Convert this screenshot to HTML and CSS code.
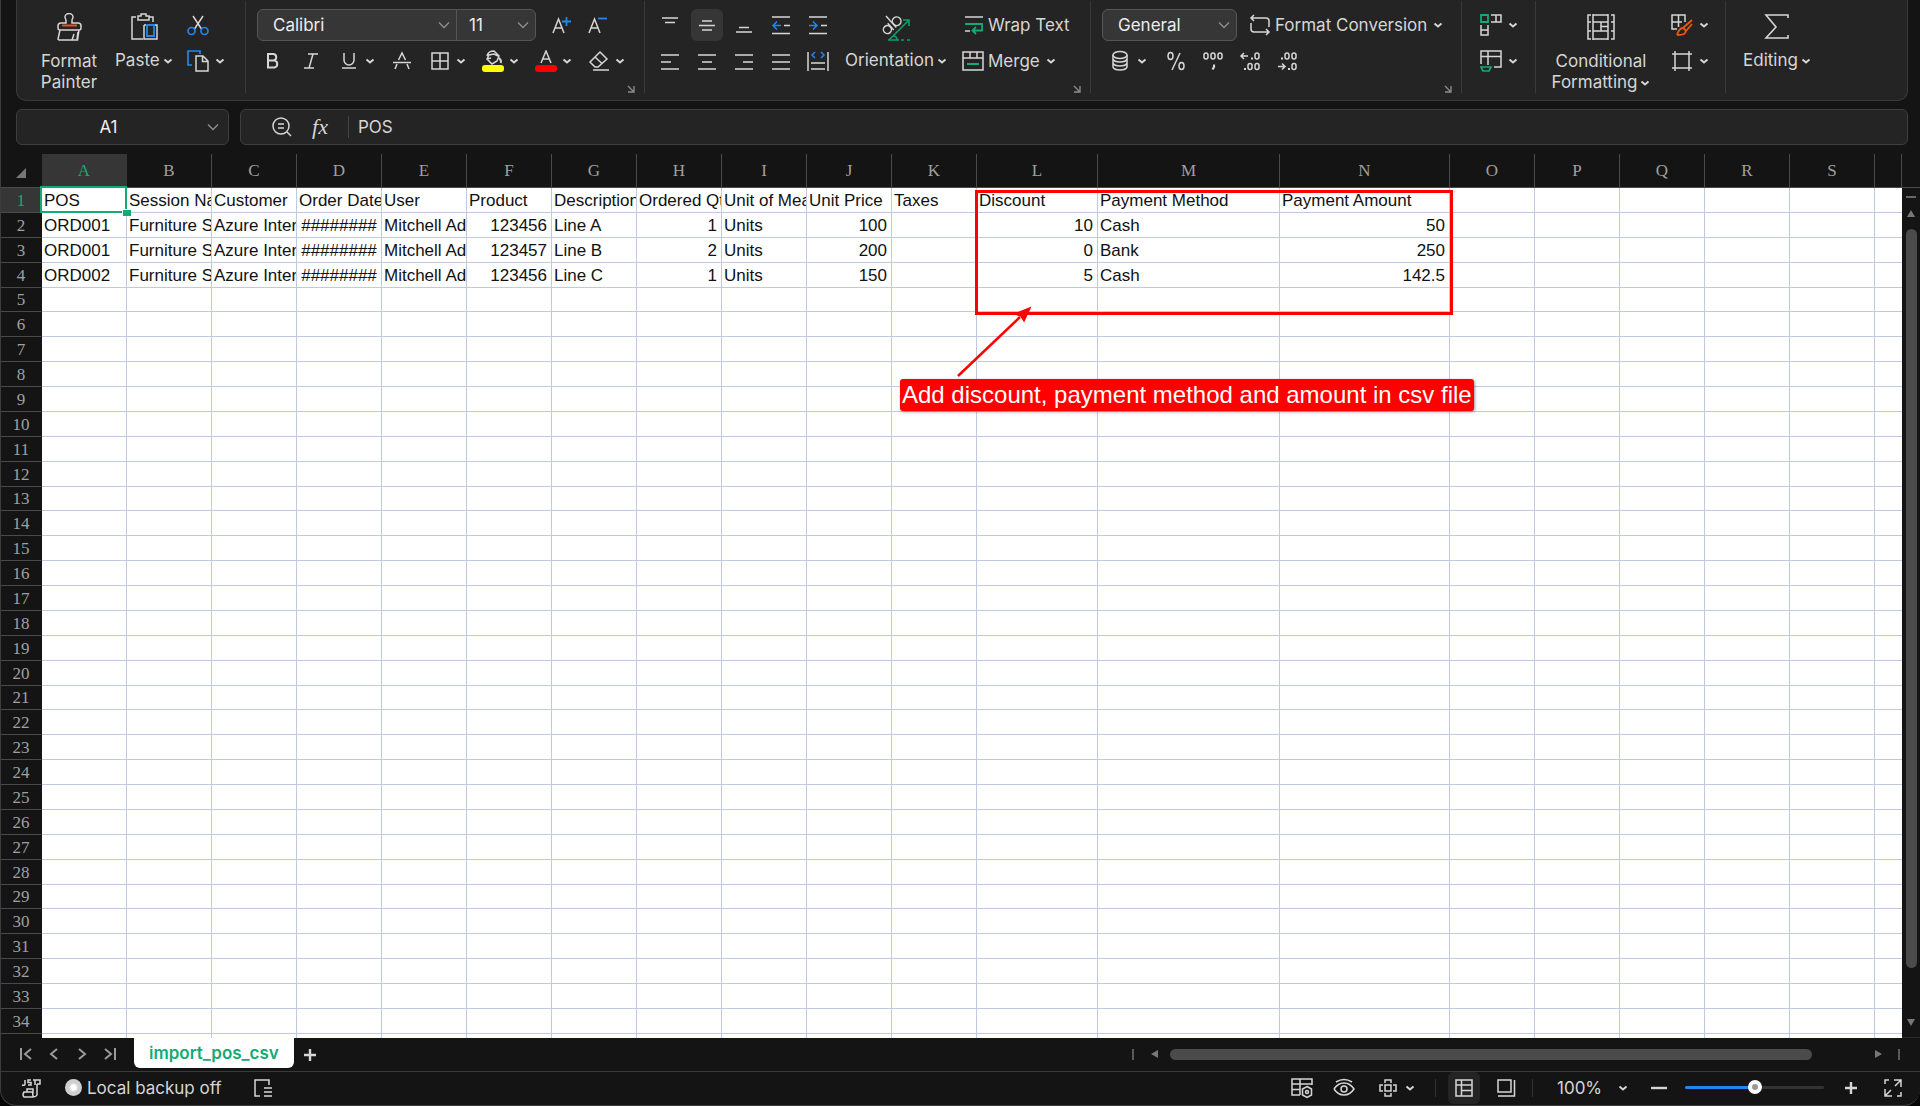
FILE: index.html
```html
<!DOCTYPE html>
<html lang="en">
<head>
<meta charset="utf-8">
<title>import_pos_csv</title>
<link rel="stylesheet" href="styles.css">
</head>
<body>
<svg class="defs" aria-hidden="true">
  <symbol id="chev" viewBox="0 0 10 10"><path d="M1.5 3.5 5 6.5 8.500 3.500" stroke-width="2"/></symbol>
  <symbol id="chev-wide" viewBox="0 0 12 12"><path d="M1 3.500 6 8.500 11 3.500" stroke-width="1.300"/></symbol>
  <symbol id="launch" viewBox="0 0 8 8"><path d="M1 1 6 6M7 1V7H1" stroke-width="1.300"/></symbol>
</svg>
<div class="window">
  <header class="ribbon">
    <section class="group clipboard">
      <button class="big painter"><svg class="icon28" viewBox="0 0 28 28"><path d="M11 10V7.500C11 6 10 5.500 10 4A4 3.500 0 0 1 18 4C18 5.500 17 6 17 7.500V10H23Q26 10 26 13V15Q26 17 24 17L22.500 27H4L3 26 5 17Q3 17 3 15V13Q3 10 6 10ZM5 17H24M17 27 19 21M22 26 23 19"/><path d="M7 12.500H22" stroke="#e8501d" stroke-width="2"/></svg><span class="label two">Format<br>Painter</span></button>
      <button class="big"><svg class="icon28" viewBox="0 0 28 28"><path d="M6 4H2V26H13M19 4H23V9M8 3H11V1H16V3H19V7H8Z"/><path d="M14 12H16M26 12H27V26H14V12M24 12H27"/><path d="M17 12H24V23H17Z" stroke="#2186f0" stroke-width="1.800"/></svg><span class="label">Paste<svg class="chev"><use href="#chev"/></svg></span></button>
      <div class="stack">
        <button class="tool" aria-label="Cut"><svg class="icon22" viewBox="0 0 22 22"><path d="M6 2 14.500 15M16 2 7.500 15"/><g stroke="#2186f0" stroke-width="1.700"><circle cx="4.500" cy="17" r="3.500"/><circle cx="17.500" cy="17" r="3.500"/></g></svg></button>
        <button class="split" aria-label="Copy"><svg class="icon22" viewBox="0 0 22 22"><path d="M5 15H1V1H13V4" stroke="#2186f0" stroke-width="1.700"/><path d="M9 6H16L21 11V21H9ZM15.500 6V11.500H21"/></svg><svg class="chev"><use href="#chev"/></svg></button>
      </div>
    </section>
    <section class="group font">
      <div class="row">
        <label class="picker family"><select aria-label="Font"><option>Calibri</option></select><svg class="arrow"><use href="#chev-wide"/></svg></label>
        <label class="picker size"><select aria-label="Font size"><option>11</option></select><svg class="arrow"><use href="#chev-wide"/></svg></label>
        <button class="tool grow" aria-label="Increase font size"><svg class="icon22" viewBox="0 0 22 22"><path d="M2 19 7.500 5 13 19M4 14H11"/><path d="M15.500 3V12M11 7.500H20" stroke="#2186f0" stroke-width="1.800"/></svg></button>
        <button class="tool grow" aria-label="Decrease font size"><svg class="icon22" viewBox="0 0 22 22"><path d="M2 19 7.500 5 13 19M4 14H11"/><path d="M11 4.500H20" stroke="#2186f0" stroke-width="1.800"/></svg></button>
      </div>
      <div class="row format">
        <button class="tool" aria-label="Bold"><svg class="icon22" viewBox="0 0 22 22"><path d="M6 4H11.500A3.300 3.300 0 0 1 11.500 10.500H6ZM6 10.500H12.500A3.600 3.600 0 0 1 12.500 17.500H6Z" stroke-width="2"/></svg></button>
        <button class="tool" aria-label="Italic"><svg class="icon22" viewBox="0 0 22 22"><path d="M8 4H18M4 18H14M13 4 9 18"/></svg></button>
        <button class="split" aria-label="Underline"><svg class="icon22" viewBox="0 0 22 22"><path d="M6 3V10A5 5 0 0 0 16 10V3M4 18H18"/></svg><svg class="chev"><use href="#chev"/></svg></button>
        <button class="tool" aria-label="Strikethrough"><svg class="icon22" viewBox="0 0 22 22"><path d="M7.500 10 11 3 14.500 10M2 12.500H20M6 14 4 19M16 14 18 19"/></svg></button>
        <button class="split" aria-label="Borders"><svg class="icon22" viewBox="0 0 22 22"><path d="M3 3H19V19H3ZM11 3V19M3 11H19"/></svg><svg class="chev"><use href="#chev"/></svg></button>
        <button class="split" aria-label="Fill color"><svg class="icon22" viewBox="0 0 22 22"><path d="M5 6Q6 1 12 1L17 6 15 11 10 14 5 9 7 5 12 4 16 6M5 9 9 8"/><path d="M17 8Q20 11 18.500 13" stroke-width="2"/><rect x="0" y="15" width="22" height="7" rx="3" fill="#ff0" stroke="none"/></svg><svg class="chev"><use href="#chev"/></svg></button>
        <button class="split" aria-label="Font color"><svg class="icon22" viewBox="0 0 22 22"><path d="M6 13 11 1 16 13M8 9H14"/><rect x="0" y="15" width="22" height="7" rx="3" fill="#f00" stroke="none"/></svg><svg class="chev"><use href="#chev"/></svg></button>
        <button class="split" aria-label="Clear"><svg class="icon22" viewBox="0 0 22 22"><path d="M12 2 19 9 10 17H7L2 12ZM7 7 14 13.500M5 20H21"/></svg><svg class="chev"><use href="#chev"/></svg></button>
      </div>
      <button class="launcher" aria-label="Font settings"><svg><use href="#launch"/></svg></button>
    </section>
    <section class="group align">
      <div class="stack">
        <div class="row tight">
          <button class="tool box" aria-label="Top align"><svg class="icon22" viewBox="0 0 22 22"><path d="M3 4H19M6 8.500H16"/></svg></button>
          <button class="tool box on" aria-label="Middle align"><svg class="icon22" viewBox="0 0 22 22"><path d="M6 7H16M3 11.500H19M6 16H16"/></svg></button>
          <button class="tool box" aria-label="Bottom align"><svg class="icon22" viewBox="0 0 22 22"><path d="M6 13.500H16M3 18H19"/></svg></button>
          <button class="tool box" aria-label="Decrease indent"><svg class="icon22" viewBox="0 0 22 22"><path d="M2 3H20M14 11.500H20M2 19.500H20"/><path d="M11 11.500H3M7 7.500 3 11.500 7 15.500" stroke="#2186f0"/></svg></button>
          <button class="tool box" aria-label="Increase indent"><svg class="icon22" viewBox="0 0 22 22"><path d="M2 3H20M14 11.500H20M2 19.500H20"/><path d="M2 11.500H10M6 7.500 10 11.500 6 15.500" stroke="#2186f0"/></svg></button>
        </div>
        <div class="row tight">
          <button class="tool box" aria-label="Align left"><svg class="icon22" viewBox="0 0 22 22"><path d="M2 5H20M2 12H12M2 19H20"/></svg></button>
          <button class="tool box" aria-label="Center"><svg class="icon22" viewBox="0 0 22 22"><path d="M2 5H20M6 12H16M2 19H20"/></svg></button>
          <button class="tool box" aria-label="Align right"><svg class="icon22" viewBox="0 0 22 22"><path d="M2 5H20M10 12H20M2 19H20"/></svg></button>
          <button class="tool box" aria-label="Justify"><svg class="icon22" viewBox="0 0 22 22"><path d="M2 5H20M2 12H20M2 19H20"/></svg></button>
          <button class="tool box" aria-label="Distribute"><svg class="icon22" viewBox="0 0 22 22"><path d="M1 2V21M21 2V21M4 13H18M4 19H18"/><path d="M8 2 5 5 8 8M14 2 17 5 14 8" stroke="#2186f0"/></svg></button>
        </div>
      </div>
      <button class="big orient"><svg class="icon28" viewBox="0 0 28 28"><g transform="rotate(-42 12 12)"><circle cx="4" cy="11" r="4"/><path d="M8.500 6.500V15.500M12 0V15.500"/><circle cx="16.500" cy="11" r="4.300"/></g><path d="M7 27 27 7M21 7H27V13M6 27H17M19 27H22M25 27H28M11 23Q15 23 15 27" stroke="#0f9c68" stroke-width="1.700"/></svg><span class="label">Orientation<svg class="chev"><use href="#chev"/></svg></span></button>
      <div class="stack">
        <button class="wide"><svg class="icon22" viewBox="0 0 22 22"><path d="M3 3H21M3 17H8"/><path d="M3 10H20V16.500H11M14 13 10.500 16.500 14 20" stroke="#12ab73" stroke-width="1.800"/></svg>Wrap Text</button>
        <button class="wide"><svg class="icon22" viewBox="0 0 22 22"><path d="M1 2H21V20H1ZM1 8H21M8 2V8M15 2V8"/><path d="M5 14H17" stroke="#12ab73" stroke-width="2"/></svg>Merge<svg class="chev"><use href="#chev"/></svg></button>
      </div>
      <button class="launcher" aria-label="Alignment settings"><svg><use href="#launch"/></svg></button>
    </section>
    <section class="group number">
      <div class="row">
        <label class="picker general"><select aria-label="Number format"><option>General</option></select><svg class="arrow"><use href="#chev-wide"/></svg></label>
        <button class="wide conv"><svg class="icon22" viewBox="0 0 22 22"><path d="M5 1 2 4 5 7M2 4H17Q20 4 20 7V13M2 9V15Q2 18 5 18H20M17 15 20 18 17 21"/></svg>Format Conversion<svg class="chev"><use href="#chev"/></svg></button>
      </div>
      <div class="row numbers">
        <button class="split" aria-label="Currency"><svg class="icon22" viewBox="0 0 22 22"><ellipse cx="11" cy="5" rx="7" ry="3.500"/><path d="M4 5V9Q5 12 11 12T18 9V5M4 9V13Q5 16 11 16T18 13V9M4 13V17Q5 20 11 20T18 17V13"/></svg><svg class="chev"><use href="#chev"/></svg></button>
        <button class="tool" aria-label="Percent"><svg class="icon22" viewBox="0 0 22 22"><ellipse cx="5.500" cy="6" rx="2.500" ry="3.500"/><ellipse cx="16.500" cy="16" rx="2.500" ry="3.500"/><path d="M15 3 7 20"/></svg></button>
        <button class="tool" aria-label="Thousands separator"><svg class="icon22" viewBox="0 0 22 22"><rect x="2" y="3" width="4" height="6" rx="2"/><rect x="9" y="3" width="4" height="6" rx="2"/><rect x="16" y="3" width="4" height="6" rx="2"/><path d="M11 15.500H12V17L10.500 19.500" stroke-width="2.200"/></svg></button>
        <button class="tool" aria-label="Increase decimals"><svg class="icon22" viewBox="0 0 22 22"><path d="M9 6H2M5 3 2 6 5 9"/><path d="M12 8.500H14M5 19H7" stroke-width="2.200"/><rect x="16" y="3" width="4" height="6" rx="2"/><rect x="9" y="13.500" width="4" height="6" rx="2"/><rect x="16" y="13.500" width="4" height="6" rx="2"/></svg></button>
        <button class="tool" aria-label="Decrease decimals"><svg class="icon22" viewBox="0 0 22 22"><path d="M2 16.500H9M6 13.500 9 16.500 6 19.500"/><path d="M5 8.500H7M12 19H14" stroke-width="2.200"/><rect x="9" y="3" width="4" height="6" rx="2"/><rect x="16" y="3" width="4" height="6" rx="2"/><rect x="16" y="13.500" width="4" height="6" rx="2"/></svg></button>
      </div>
      <button class="launcher" aria-label="Number settings"><svg><use href="#launch"/></svg></button>
    </section>
    <section class="group cells">
      <div class="stack">
        <button class="split" aria-label="Rows and columns"><svg class="icon22" viewBox="0 0 22 22"><path d="M11 1H21V8H11M16 1V8M1 11V21H8V11M1 16H8"/><path d="M1 1H8V8H1Z" stroke="#12ab73" stroke-width="1.800"/></svg><svg class="chev"><use href="#chev"/></svg></button>
        <button class="split" aria-label="Sheet"><svg class="icon22" viewBox="0 0 22 22"><path d="M1 14V1H21V17H14M1 6.500H21M8 1V15"/><path d="M1 17H11L9 21H3Z" stroke="#12ab73" stroke-width="1.700"/></svg><svg class="chev"><use href="#chev"/></svg></button>
      </div>
    </section>
    <section class="group styles">
      <button class="big"><svg class="icon28" viewBox="0 0 28 28"><path d="M4 2H1V26H4M24 2H27V26H24M1 9H4M1 18H4M24 9H27M24 18H27M6 2H21V9H6ZM6 18H21V26H6ZM6 9V18M14 9V18M14 13.500H21V9M6 1V27M21 1V27"/></svg><span class="label two">Conditional<br>Formatting<svg class="chev"><use href="#chev"/></svg></span></button>
      <div class="stack">
        <button class="split" aria-label="Cell styles"><svg class="icon22" viewBox="0 0 22 22"><path d="M6 15H1V1H14V8M1 8H11M7.500 1V13"/><path d="M21 6 12 14M21 10 15 17M6 21Q8 14 12 14 17 17 13 20 11 21 6 21" stroke="#f0580f" stroke-width="1.800"/></svg><svg class="chev"><use href="#chev"/></svg></button>
        <button class="split" aria-label="Format cells"><svg class="icon22" viewBox="0 0 22 22"><path d="M4 1V21M18 1V21M1 4H21M1 18H21"/></svg><svg class="chev"><use href="#chev"/></svg></button>
      </div>
    </section>
    <section class="group editing">
      <button class="big"><svg class="icon28" viewBox="0 0 28 28"><path d="M25 5V2H3L13 14 3 25H25V22" stroke-width="1.600"/></svg><span class="label">Editing<svg class="chev"><use href="#chev"/></svg></span></button>
    </section>
  </header>

  <div class="formula-row">
    <label class="field name-box"><input type="text" value="A1" aria-label="Name box"><svg class="arrow"><use href="#chev-wide"/></svg></label>
    <div class="field formula">
      <button class="tool" aria-label="Look up"><svg class="icon22" viewBox="0 0 22 22"><circle cx="10" cy="10" r="8"/><path d="M16 16 20 20M7 8H13M7 12H13"/></svg></button>
      <button class="fx" aria-label="Insert function">fx</button>
      <input type="text" value="POS" aria-label="Formula">
    </div>
  </div>

  <main class="sheet">
    <div class="cells-area">
      <table class="grid">
        <colgroup><col class="c-num"><col span="11" class="c-std"><col class="c-l"><col class="c-m"><col class="c-n"><col span="5" class="c-std"><col></colgroup>
        <thead><tr><th class="corner" aria-label="Select all"><svg viewBox="0 0 10 10"><path d="M10 0V10H0Z"/></svg></th><th class="on">A</th><th>B</th><th>C</th><th>D</th><th>E</th><th>F</th><th>G</th><th>H</th><th>I</th><th>J</th><th>K</th><th>L</th><th>M</th><th>N</th><th>O</th><th>P</th><th>Q</th><th>R</th><th>S</th><th></th></tr></thead>
        <tbody id="rows">
          <tr><th class="on">1</th><td class="active">POS</td><td>Session Name</td><td>Customer</td><td>Order Date</td><td>User</td><td>Product</td><td>Description</td><td>Ordered Qty</td><td>Unit of Measure</td><td>Unit Price</td><td>Taxes</td><td>Discount</td><td>Payment Method</td><td>Payment Amount</td><td></td><td></td><td></td><td></td><td></td><td></td></tr>
          <tr><th>2</th><td>ORD001</td><td>Furniture Shop</td><td>Azure Interior</td><td class="mid">########</td><td>Mitchell Admin</td><td class="n">123456</td><td>Line A</td><td class="n">1</td><td>Units</td><td class="n">100</td><td></td><td class="n">10</td><td>Cash</td><td class="n">50</td><td></td><td></td><td></td><td></td><td></td><td></td></tr>
          <tr><th>3</th><td>ORD001</td><td>Furniture Shop</td><td>Azure Interior</td><td class="mid">########</td><td>Mitchell Admin</td><td class="n">123457</td><td>Line B</td><td class="n">2</td><td>Units</td><td class="n">200</td><td></td><td class="n">0</td><td>Bank</td><td class="n">250</td><td></td><td></td><td></td><td></td><td></td><td></td></tr>
          <tr><th>4</th><td>ORD002</td><td>Furniture Shop</td><td>Azure Interior</td><td class="mid">########</td><td>Mitchell Admin</td><td class="n">123456</td><td>Line C</td><td class="n">1</td><td>Units</td><td class="n">150</td><td></td><td class="n">5</td><td>Cash</td><td class="n">142.5</td><td></td><td></td><td></td><td></td><td></td><td></td></tr>
        </tbody>
      </table>
      <div class="mark"></div>
      <svg class="pointer" viewBox="0 0 80 74"><path d="M4 70 66 11" stroke="#f00" stroke-width="2.500"/><path d="M76 2 70 15 67 10 61 8Z" fill="#f00" stroke="#f00"/></svg>
      <div class="note">Add discount, payment method and amount in csv file</div>
    </div>
    <div class="vscroll">
      <i class="dash"></i><i class="tri up"></i><i class="thumb"></i><i class="tri down"></i>
    </div>
  </main>

  <nav class="tabs">
    <div class="steps">
      <button aria-label="First sheet"><svg viewBox="0 0 12 14"><path d="M1 1V13M11 2 5 7 11 12"/></svg></button>
      <button aria-label="Previous sheet"><svg viewBox="0 0 12 14"><path d="M9 2 3 7 9 12"/></svg></button>
      <button aria-label="Next sheet"><svg viewBox="0 0 12 14"><path d="M3 2 9 7 3 12"/></svg></button>
      <button aria-label="Last sheet"><svg viewBox="0 0 12 14"><path d="M11 1V13M1 2 7 7 1 12"/></svg></button>
    </div>
    <button class="tab">import_pos_csv</button>
    <button class="add" aria-label="Add sheet"><svg viewBox="0 0 14 14"><path d="M7 1V13M1 7H13" stroke-width="2.400"/></svg></button>
    <div class="hscroll"><i class="bar"></i><i class="tri left"></i><span class="track"><i class="thumb"></i></span><i class="tri right"></i><i class="bar"></i></div>
  </nav>

  <footer class="status">
    <button class="tool" aria-label="Script"><svg class="icon22" viewBox="0 0 22 22"><path d="M5 3V7Q5 9 2 8M11 3H8V5.500H11V8H8M13 3H20V7H17M15 3V8M17 7V18Q16 20 13 20H4Q2 18 4 15H13V12H7V15M13 15Q12 18 14 20"/></svg></button>
    <button class="backup"><i class="dot"></i>Local backup off</button>
    <button class="tool outline" aria-label="Outline"><svg class="icon22" viewBox="0 0 22 22"><path d="M17 8V3H3V19H8M12 11H20M12 15H20M12 19H20"/></svg></button>
    <div class="views">
      <button class="tool v1" aria-label="Table settings"><svg class="icon22" viewBox="0 0 22 22"><path d="M9 18H1V2H21V8M1 7H21M1 12.500H9M9 2V18"/><path d="M16 9.500 20.500 12V18L16 20.500 11.500 18V12Z"/><circle cx="16" cy="15" r="1.500"/></svg></button>
      <button class="tool v2" aria-label="Reading mode"><svg class="icon22" viewBox="0 0 22 22"><path d="M1 12Q5 6 11 6T21 12Q17 18 11 18T1 12M3 5Q11 0 19 5"/><circle cx="11" cy="12" r="3"/></svg></button>
      <button class="split v3" aria-label="Highlight"><svg class="icon22" viewBox="0 0 22 22"><path d="M8 8H14V14H8ZM8 6V3H14V6M8 16V19H14V16M6 8H3V14H6M16 8H19V14H16"/></svg><svg class="chev"><use href="#chev"/></svg></button>
      <i class="sep"></i>
      <button class="tool box on" aria-label="Normal view"><svg class="icon22" viewBox="0 0 22 22"><path d="M3 3H19V19H3ZM3 8H19M8.500 3V19M8.500 13.500H19"/></svg></button>
      <button class="tool box" aria-label="Page view"><svg class="icon22" viewBox="0 0 22 22"><path d="M3 3H16V15H3ZM19.500 3V19H3"/></svg></button>
      <i class="sep s2"></i>
      <button class="zoom">100%<svg class="chev"><use href="#chev"/></svg></button>
      <button class="step" aria-label="Zoom out"><svg viewBox="0 0 16 16"><path d="M0 8H16" stroke-width="2.400"/></svg></button>
      <input class="slider" type="range" min="0" max="100" value="50" aria-label="Zoom">
      <button class="step" aria-label="Zoom in"><svg viewBox="0 0 16 16"><path d="M8 2V14M2 8H14" stroke-width="2.400"/></svg></button>
      <button class="tool full" aria-label="Full screen"><svg class="icon22" viewBox="0 0 22 22"><path d="M3 7V3H7M3 15V19H7M19 15V19H15M12 3H19V10M19 3 13 9M3 19 9 13M3 12V19H10"/></svg></button>
    </div>
  </footer>
</div>
<script src="script.js"></script>
</body>
</html>
```
FILE: styles.css
```css
* { box-sizing: border-box; }
html, body { height: 100%; margin: 0; }
body { background: #050505; color: #d6d6d6; font: 17px/22px Inter, "Liberation Sans", sans-serif; overflow: hidden; }
.defs { position: absolute; width: 0; height: 0; }
svg { display: block; flex: none; fill: none; stroke: currentColor; stroke-width: 1.5; }
button { background: none; border: 0; padding: 0; margin: 0; color: inherit; font: inherit; display: flex; align-items: center; justify-content: center; flex: none; white-space: nowrap; }
input, select { color: inherit; font: inherit; background: none; border: 0; padding: 0; margin: 0; min-width: 0; outline: 0; }
i { display: block; flex: none; }

.window { height: 100vh; display: flex; flex-direction: column; background: #141414; border: 1px solid #3c3c3c; border-top: 0; border-right: 0; border-radius: 0 0 16px 16px; overflow: hidden; }

/* Ribbon */
.ribbon { flex: none; height: 101px; margin: 0 12px 0 15px; display: flex; background: #242424; border: 1px solid #3a3a3a; border-top: 0; border-radius: 0 0 10px 10px; overflow: hidden; }
.group { position: relative; flex: none; display: flex; padding-top: 9px; }
.group + .group::before { content: ""; position: absolute; left: 0; top: 1px; width: 1px; height: 92px; background: #3a3a3a; }
.stack { display: flex; flex-direction: column; gap: 4px; }
.row { display: flex; height: 32px; }
.icon22 { width: 22px; height: 22px; }
.icon28 { width: 28px; height: 28px; }
.chev { width: 10px; height: 10px; }
.arrow { width: 12px; height: 12px; color: #8f8f8f; }
.tool { width: 22px; height: 32px; }
.tool.grow { width: 36px; }
.tool.box { width: 32px; }
.tool.on { background: #363636; border-radius: 6px; }
.split { height: 32px; gap: 6px; }
.wide { height: 32px; gap: 4px; justify-content: flex-start; }
.wide .chev { margin-left: 2px; }
.big { flex-direction: column; justify-content: flex-start; padding-top: 4px; height: 90px; }
.big .label { margin-top: 8px; }
.big .label.two { margin-top: 10px; line-height: 21px; }
.big .chev { display: inline-block; margin-left: 3px; }
.launcher { position: absolute; right: 9px; bottom: 7px; width: 8px; height: 8px; color: #8f8f8f; }
.launcher svg { width: 8px; height: 8px; }

.clipboard { width: 228px; padding-left: 15px; }
.painter { width: 74px; margin-right: 9px; }
.clipboard .stack { margin-left: 14px; align-items: flex-start; }
.font { width: 399px; flex-direction: column; gap: 4px; padding-left: 12px; }
.format { gap: 16px; margin-left: 5px; }
.format .split { gap: 5px; }
.align { width: 446px; padding-left: 10px; }
.tight { gap: 5px; }
.orient { width: 104px; margin: 0 14px 0 10px; }
.number { width: 371px; flex-direction: column; gap: 4px; padding-left: 12px; }
.conv { margin-left: 12px; }
.numbers .split { margin: 0 18px 0 7px; }
.numbers .tool { margin-right: 15px; }
.cells { width: 74px; padding-left: 19px; }
.styles { width: 190px; padding-left: 18px; }
.styles .big { width: 96px; }
.styles .stack { margin-left: 22px; }
.editing { padding-left: 18px; }

.picker, .name-box { display: grid; align-items: center; }
.picker { height: 32px; background: #363636; border: 1px solid #565656; }
.picker select, .name-box input { grid-area: 1 / 1; width: 100%; height: 100%; appearance: none; }
.picker .arrow, .name-box .arrow { grid-area: 1 / 1; justify-self: end; margin-right: 6px; pointer-events: none; }
.picker select { padding-left: 15px; color: #ececec; }
.family { width: 200px; border-radius: 6px 0 0 6px; }
.size { width: 80px; margin: 0 8px 0 -1px; border-radius: 0 6px 6px 0; }
.size select { padding-left: 12px; }
.general { width: 135px; border-radius: 6px; }

/* Formula bar */
.formula-row { flex: none; display: flex; gap: 11px; height: 53px; padding: 8px 12px 9px 15px; }
.field { background: #242424; border: 1px solid #3f3f3f; border-radius: 6px; }
.name-box { width: 213px; }
.name-box input { padding-right: 28px; text-align: center; color: #f0f0f0; }
.name-box .arrow { margin-right: 9px; }
.formula { flex: 1; display: flex; align-items: center; padding-left: 30px; }
.fx { width: 38px; padding-left: 16px; font: italic 22px/32px "Liberation Serif", serif; }
.formula input { flex: 1; margin-left: 17px; padding-left: 9px; border-left: 1px solid #444; }

/* Sheet */
.sheet { flex: 1; min-height: 0; display: flex; }
.cells-area { position: relative; flex: 1; min-width: 0; overflow: hidden; }
.grid { width: 100%; table-layout: fixed; border-collapse: separate; border-spacing: 0; color: #111; font: 17px/22px "Liberation Sans", Arial, sans-serif; }
.c-num { width: 41px; }
.c-std { width: 85px; }
.c-l { width: 121px; }
.c-m { width: 182px; }
.c-n { width: 170px; }
.grid th { padding: 0; font: 17px/22px "Liberation Serif", serif; color: #a0a0a0; background: #141414; border: solid #4a4a4a; border-width: 0 1px 1px 0; text-align: center; }
.grid tbody th { border-right-color: #141414; }
.grid th.on { background: #363636; color: #12ab73; }
.grid thead .corner { border-right-color: #141414; }
.grid thead th:nth-child(2) { border-right-color: #363636; }
.corner svg { width: 10px; height: 10px; margin: 4px 0 0 15px; fill: #777; stroke: none; }
.grid tbody tr > * { height: 25px; line-height: 23px; }
.grid tbody tr:nth-child(8n + 5) > * { height: 24px; }
.grid thead th { height: 34px; }
.grid td { background: #fff; padding: 0 0 0 2px; border: solid #bfc9df; border-width: 0 1px 1px 0; white-space: nowrap; overflow: hidden; }
.grid td:last-child { border-right: 0; }
.grid td.n { text-align: right; padding-right: 4px; }
.grid td.mid { text-align: center; padding: 0; }
.grid td.active { position: relative; overflow: visible; }
.active::before { content: ""; position: absolute; inset: -2px -1px -1px -2px; border: 2px solid #12ab73; }
.active::after { content: ""; position: absolute; right: -5px; bottom: -4px; width: 8px; height: 6px; background: #12ab73; border: solid #fff; border-width: 1px 0 0 1px; box-sizing: content-box; }
.mark { position: absolute; left: 974px; top: 36px; width: 478px; height: 125px; border: 3px solid #f00; }
.pointer { position: absolute; left: 953px; top: 152px; width: 80px; height: 74px; }
.note { position: absolute; left: 899px; top: 225px; padding: 0 2px; font: 24px/32px "Liberation Sans", Arial, sans-serif; color: #fff; background: #f00; border-radius: 3px; box-shadow: 1px 1px 3px #0006; white-space: nowrap; }

.tri { width: 0; height: 0; border: 4px solid transparent; }
.up { border-bottom: 7px solid #777; border-top: 0; }
.down { border-top: 7px solid #777; border-bottom: 0; }
.left { border-right: 7px solid #777; border-left: 0; }
.right { border-left: 7px solid #777; border-right: 0; }
.thumb { background: #4b4b4b; border-radius: 6px; }
.vscroll { width: 18px; margin-top: 33px; border-top: 1px solid #4a4a4a; border-bottom: 1px solid #2a2a2a; display: flex; flex-direction: column; align-items: center; padding: 8px 0 11px; }
.vscroll .dash { width: 10px; height: 2px; background: #666; margin-bottom: 12px; }
.vscroll .thumb { width: 11px; flex: 1; margin: 12px 0 51px; }

/* Sheet tabs */
.tabs { flex: none; display: flex; align-items: flex-start; height: 34px; border-bottom: 1px solid #3a3a3a; }
.steps { display: flex; width: 133px; height: 32px; padding-left: 19px; gap: 16px; color: #9a9a9a; }
.steps svg { width: 12px; height: 14px; stroke-width: 2; }
.tab { height: 30px; padding: 0 15px; background: #fff; border-radius: 0 0 6px 6px; color: #12ab73; font-weight: 600; }
.add { width: 32px; height: 34px; }
.add svg { width: 14px; height: 14px; }
.hscroll { width: 768px; height: 32px; margin-left: auto; margin-right: 20px; display: flex; align-items: center; }
.bar { width: 2px; height: 11px; background: #5a5a5a; }
.hscroll .left { margin: 0 12px 0 17px; }
.track { flex: 1; }
.track .thumb { width: 91%; height: 11px; }
.hscroll .right { margin: 0 16px 0 0; }

/* Status bar */
.status { flex: none; display: flex; align-items: center; height: 33px; padding: 0 16px 2px 19px; }
.backup { margin-left: 23px; gap: 5px; }
.dot { width: 17px; height: 17px; border-radius: 50%; background: radial-gradient(#fff 20%, #cfcfcf 40%); }
.outline { margin-left: 30px; }
.views { display: flex; align-items: center; margin-left: auto; }
.v2 { margin-left: 20px; }
.v3 { margin: 0 20px 0 22px; }
.sep { width: 1px; height: 18px; background: #333; margin-right: 12px; }
.views .box + .box { margin-left: 10px; }
.views .on { background: #242424; }
.sep.s2 { margin: 0 24px 0 10px; }
.zoom { width: 71px; justify-content: space-between; }
.step { width: 16px; height: 32px; margin-left: 23px; }
.step svg { width: 16px; height: 16px; }
.slider { appearance: none; width: 139px; height: 16px; margin-left: 18px; }
.slider::-webkit-slider-runnable-track { height: 3px; border-radius: 2px; background: linear-gradient(90deg, #2186f0 50%, #333 50%); }
.slider::-webkit-slider-thumb { appearance: none; width: 14px; height: 14px; margin-top: -6px; border-radius: 50%; background: #999; border: 4px solid #fff; }
.slider + .step { margin-left: 19px; }
.full { margin-left: 23px; }
```
FILE: script.js
```js
// Fill the sheet with empty numbered rows below the data.
const body = document.getElementById('rows');
for (let n = body.rows.length + 1; n <= 60; n++) {
  const row = body.insertRow();
  const head = document.createElement('th');
  head.textContent = n;
  row.append(head);
  for (let c = 0; c < 20; c++) row.insertCell();
}
```
